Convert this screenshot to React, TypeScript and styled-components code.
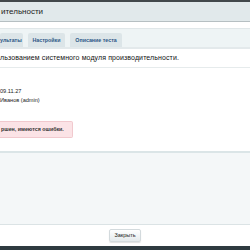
import styled, { createGlobalStyle } from "styled-components";

const GlobalStyle = createGlobalStyle`
  html, body {
    margin: 0;
    padding: 0;
    overflow: hidden;
    background: #ffffff;
  }
  body {
    font-family: "Liberation Sans", Arial, sans-serif;
    -webkit-font-smoothing: antialiased;
  }
`;

const tabs = [
  { label: "ультаты", width: 23 },
  { label: "Настройки", width: 37 },
  { label: "Описание теста", width: 52 }
];

const App = () => {
  return (
    <Dialog>
      <GlobalStyle />
      <Edge tone="#42484b" size={2} />
      <Title>ительности</Title>
      <Spacer />
      <TabStrip>
        {tabs.map((t, i) => (
          <Tab key={t.label} $width={t.width} $cut={i === 0}>
            {t.label}
          </Tab>
        ))}
      </TabStrip>
      <Content>
        <Lead>льзованием системного модуля производительности.</Lead>
        <Info>
          <div>09.11.27</div>
          <div>Иванов (admin)</div>
        </Info>
        <Alert>ршен, имеются ошибки.</Alert>
      </Content>
      <Pane />
      <Footer>
        <Button>Закрыть</Button>
      </Footer>
      <Edge tone="#2e3a40" size={4} />
    </Dialog>
  );
};

export default App;

const Dialog = styled.div`
  width: 250px;
  height: 250px;
  display: flex;
  flex-direction: column;
  background: #ffffff;
`;

const Edge = styled.div<{ tone: string; size: number }>`
  height: ${({ size }) => size}px;
  flex: none;
  background: ${({ tone }) => tone};
`;

const Title = styled.div`
  height: 19px;
  flex: none;
  background: #e1e9eb;
  border-bottom: 1px solid #b6bfc2;
  color: #222;
  font-size: 8px;
  line-height: 19px;
  padding-left: 1px;
  white-space: nowrap;
`;

const Spacer = styled.div`
  height: 6px;
  flex: none;
`;

const TabStrip = styled.div`
  height: 15px;
  flex: none;
  display: flex;
  align-items: flex-end;
  gap: 5px;
  padding-top: 3px;
  background: #eef4f5;
  border-top: 1px solid #e0e7e9;
  border-bottom: 2px solid #e3e9eb;
`;

const Tab = styled.div<{ $width: number; $cut: boolean }>`
  width: ${({ $width }) => $width}px;
  height: 14px;
  box-sizing: border-box;
  padding-right: ${({ $cut }) => ($cut ? 4 : 0)}px;
  background: #dce5e8;
  border-radius: 2px 2px 0 0;
  color: #2a5686;
  font-size: 5.3px;
  font-weight: bold;
  line-height: 14px;
  text-align: ${({ $cut }) => ($cut ? "right" : "center")};
  white-space: nowrap;
`;

const Content = styled.div`
  height: 102px;
  flex: none;
  display: flex;
  flex-direction: column;
  align-items: flex-start;
  border-bottom: 2px solid #dbe5e7;
`;

const Lead = styled.div`
  width: 100%;
  height: 18px;
  border-bottom: 1px solid #e6ebec;
  font-size: 7px;
  letter-spacing: 0.1px;
  line-height: 17px;
  color: #111;
  white-space: nowrap;
`;

const Info = styled.div`
  margin-top: 19px;
  font-size: 5.6px;
  line-height: 9px;
  color: #222;
`;

const Alert = styled.div`
  margin-top: 16px;
  width: 73px;
  height: 17px;
  box-sizing: border-box;
  padding-left: 1px;
  background: #fbe3e6;
  border: 1px solid #f1c9ce;
  border-left: none;
  border-radius: 0 2px 2px 0;
  color: #333;
  font-size: 5.3px;
  font-weight: bold;
  line-height: 15px;
  white-space: nowrap;
`;

const Pane = styled.div`
  height: 71px;
  flex: none;
  background: #f4f7f8;
  border-bottom: 1px solid #dbe3e5;
`;

const Footer = styled.div`
  flex: 1;
  display: flex;
  justify-content: center;
  align-items: flex-start;
  padding-top: 4px;
`;

const Button = styled.button`
  width: 32px;
  height: 13px;
  padding: 0;
  border: 1px solid #d3dadd;
  border-radius: 2px;
  background: linear-gradient(#ffffff, #e4eaec);
  box-shadow: 0 1px 1px rgba(0, 0, 0, 0.12);
  color: #222;
  font-family: "Liberation Sans", Arial, sans-serif;
  font-size: 5.5px;
  line-height: 11px;
`;
